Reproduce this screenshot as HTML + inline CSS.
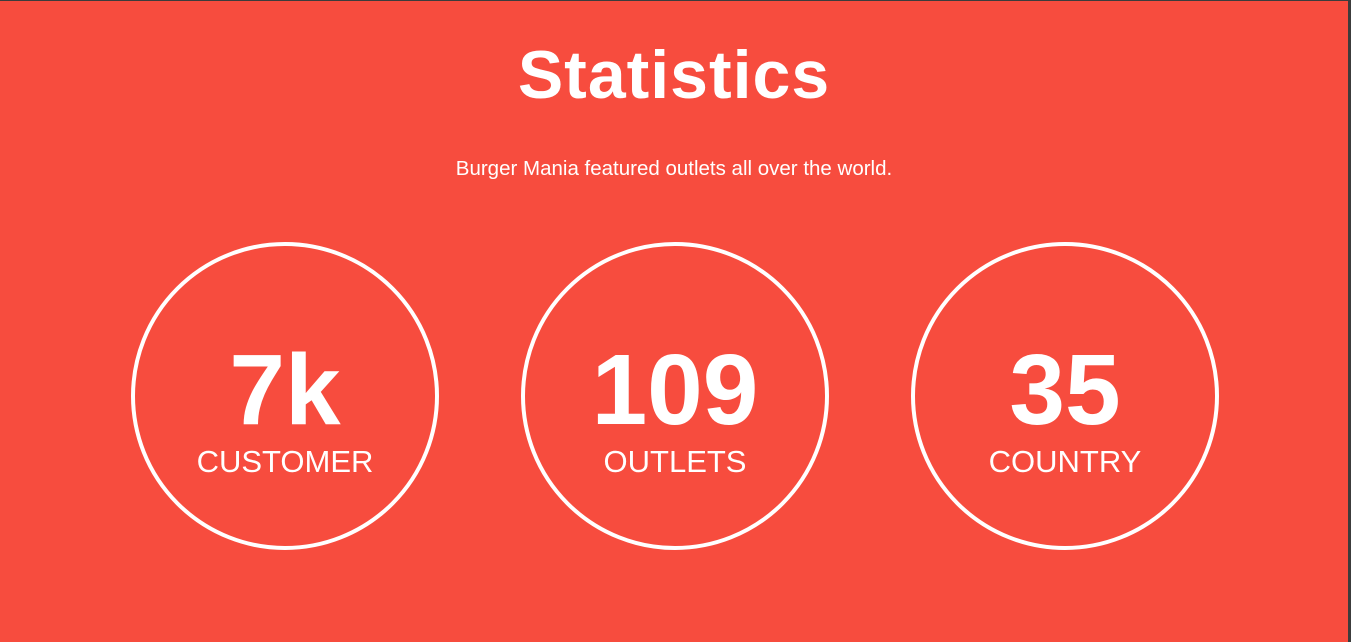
<!DOCTYPE html>
<html><head><meta charset="utf-8"><style>
html,body{margin:0;padding:0;}
body{width:1351px;height:642px;background:#3c3c3c;position:relative;overflow:hidden;font-family:"Liberation Sans",sans-serif;}
.main{position:absolute;left:0;top:1px;width:1348px;height:641px;background:#f74c3e;color:#fff;}
h1{position:absolute;left:0;width:1348px;top:36px;margin:0;text-align:center;font-size:68px;font-weight:bold;letter-spacing:1px;line-height:76px;}
.sub{position:absolute;left:0;width:1348px;top:156px;text-align:center;font-size:20.5px;line-height:24px;}
.c{position:absolute;top:241px;width:300px;height:300px;border:4px solid #fff;border-radius:50%;}
.n{position:absolute;left:0;width:100%;top:94px;text-align:center;font-size:100px;font-weight:bold;line-height:100px;}
.l{position:absolute;left:0;width:100%;top:199px;text-align:center;font-size:31px;line-height:34px;}
</style></head><body><div class="main">
<h1>Statistics</h1>
<div class="sub">Burger Mania featured outlets all over the world.</div>
<div class="c" style="left:131px"><div class="n">7k</div><div class="l">CUSTOMER</div></div>
<div class="c" style="left:521px"><div class="n">109</div><div class="l">OUTLETS</div></div>
<div class="c" style="left:911px"><div class="n">35</div><div class="l">COUNTRY</div></div>
</div></body></html>
